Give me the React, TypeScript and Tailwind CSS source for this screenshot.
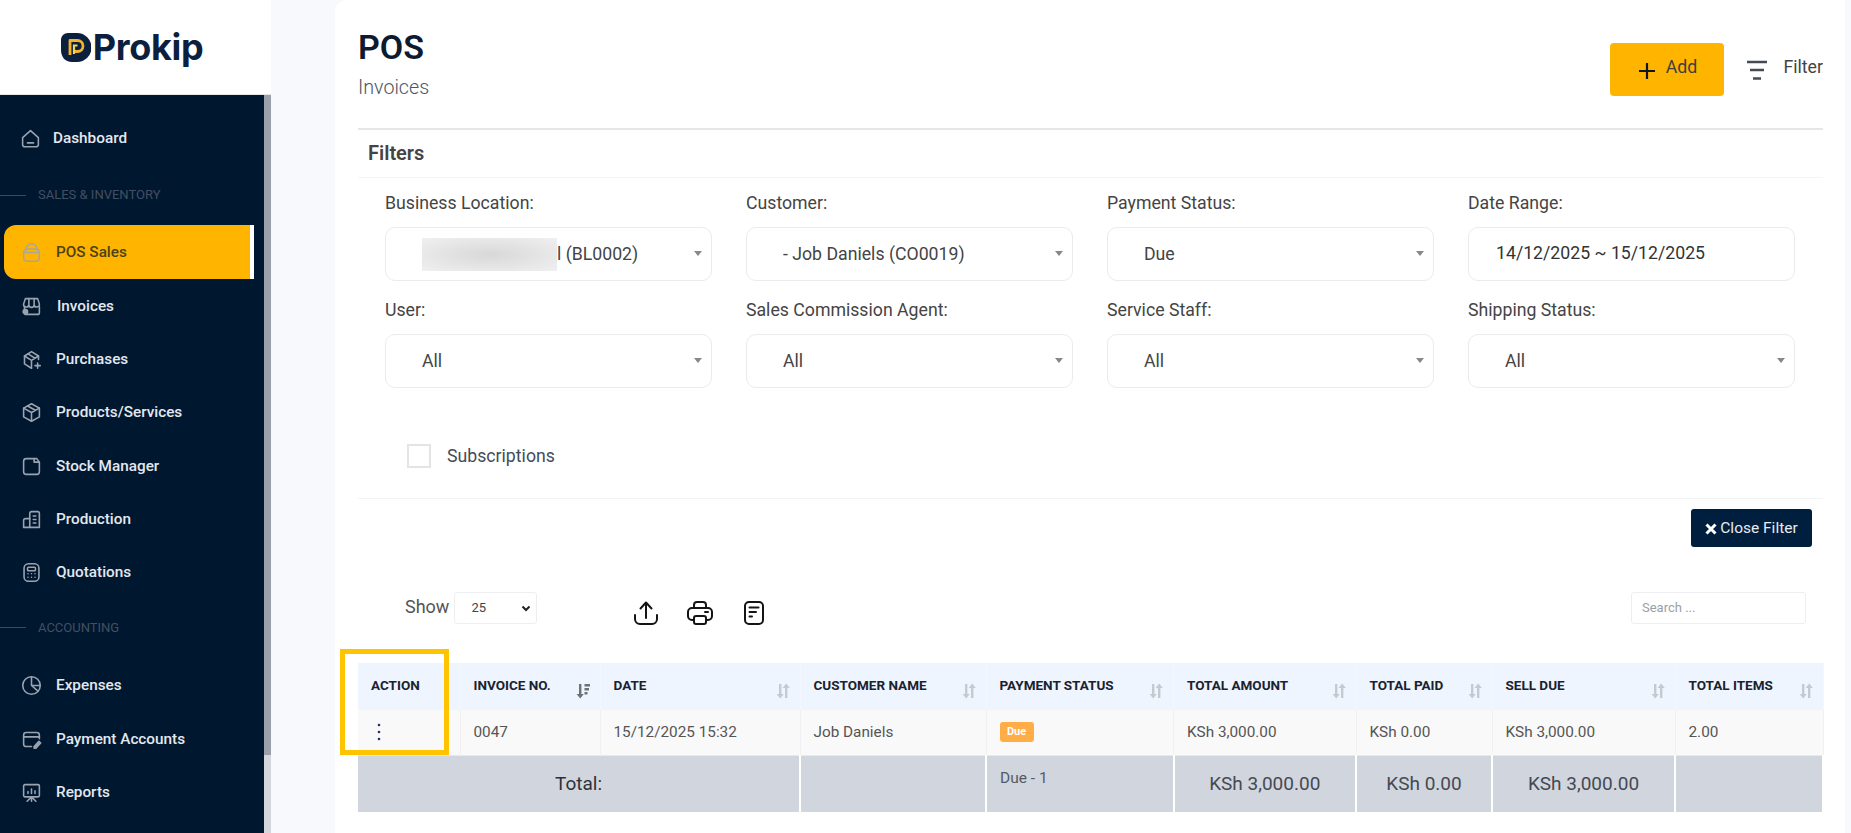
import React from "react";

type IconProps = { className?: string };
const S = ({ children, className = "" }: { children: React.ReactNode; className?: string }) => (
  <svg viewBox="0 0 24 24" fill="none" stroke="currentColor" strokeWidth="1.800" strokeLinecap="round" strokeLinejoin="round" className={className}>
    {children}
  </svg>
);

const HomeI = ({ className }: IconProps) => (
  <S className={className}><path d="M3 11 12 3l9 8v8a2.500 2.500 0 0 1-2.500 2.500h-13A2.500 2.500 0 0 1 3 19z" /><path d="M8.500 17h7" /></S>
);
const BagI = ({ className }: IconProps) => (
  <S className={className}><rect x="3" y="8" width="18" height="14" rx="4" /><path d="M6 9V8a6 6 0 0 1 12 0v1M3.500 12h17" /></S>
);
const ShopI = ({ className }: IconProps) => (
  <S className={className}><path d="M5 3h14l2 6a3 3 0 0 1-6 1 3 3 0 0 1-6 0 3 3 0 0 1-6-1z" /><path d="M9 3v6M15 3v6M4 12v7a2 2 0 0 0 2 2h13a2 2 0 0 0 2-2v-7" /><circle cx="5" cy="18" r="2.500" fill="currentColor" /></S>
);
const BoxPlusI = ({ className }: IconProps) => (
  <S className={className}><path d="M20 12V8l-8-5-8 5v9l8 5" /><path d="m4 8 8 5 8-5M12 13v9M8 5.500l8 5" /><path d="M19 16v6M16 19h6" /></S>
);
const BoxI = ({ className }: IconProps) => (
  <S className={className}><path d="m12 2 9 5v10l-9 5-9-5V7z" /><path d="m3 7 9 5 9-5M12 12v10M7.500 4.500l9 5" /></S>
);
const NoteI = ({ className }: IconProps) => (
  <S className={className}><path d="M6 3h12l3 4v11a3 3 0 0 1-3 3H6a3 3 0 0 1-3-3V6a3 3 0 0 1 3-3z" /><path d="M15 3.500V7h5.500" /></S>
);
const BuildingI = ({ className }: IconProps) => (
  <S className={className}><path d="M10 21V5a2 2 0 0 1 2-2h7a2 2 0 0 1 2 2v16z" /><path d="M10 11H5a2 2 0 0 0-2 2v8h7M14 8h3M14 12h3M14 16h3" /></S>
);
const CalcI = ({ className }: IconProps) => (
  <S className={className}><rect x="3.500" y="2" width="17" height="20" rx="5" /><rect x="7.500" y="6" width="9" height="4" rx="1" /><path d="M8 13.500h.01M12 13.500h.01M16 13.500h.01M8 17.500h.01M12 17.500h.01M16 17.500h.01" /></S>
);
const PieI = ({ className }: IconProps) => (
  <S className={className}><circle cx="12" cy="12" r="10" /><path d="M12 2v10l7.500 6.500M12 12h10" /></S>
);
const CardI = ({ className }: IconProps) => (
  <S className={className}><path d="M12 20H6a3 3 0 0 1-3-3V7a3 3 0 0 1 3-3h12a3 3 0 0 1 3 3v4" /><path d="M3 9h18" /><path d="m15 20 5.500-6 2 2-5.500 6h-2z" fill="currentColor" /></S>
);
const BoardI = ({ className }: IconProps) => (
  <S className={className}><rect x="3" y="3" width="18" height="14" rx="1.500" /><path d="M8 13v-2M12 13V8M16 13v-3M12 17v5M7 22l5-5 5 5" /></S>
);

const nav = [
  { t: "Invoices", I: ShopI, tx: "ml-[15.500px]" },
  { t: "Purchases", I: BoxPlusI, tx: "ml-[14.500px]" },
  { t: "Products/Services", I: BoxI, tx: "ml-[14.500px]" },
  { t: "Stock Manager", I: NoteI, tx: "ml-[14.500px]" },
  { t: "Production", I: BuildingI, tx: "ml-[14.500px]" },
  { t: "Quotations", I: CalcI, tx: "ml-[14.500px]" },
];
const nav2 = [
  { t: "Expenses", I: PieI },
  { t: "Payment Accounts", I: CardI },
  { t: "Reports", I: BoardI },
];

const NavItem = ({ t, I, tx = "ml-[14.500px]" }: { t: string; I: React.ComponentType<IconProps>; tx?: string }) => (
  <div className="flex h-[53.3px] items-center pl-[20.500px] pt-[1px] text-[15.300px] font-medium text-[#e4e8ee]">
    <I className="h-[21px] w-[21px] text-[#9aa3ae]" />
    <span className={tx}>{t}</span>
  </div>
);

const Section = ({ t, h }: { t: string; h: string }) => (
  <div className={`flex items-center text-[13px] text-[#434f60] ${h}`}>
    <span className="mr-3 h-px w-[26px] bg-[#3d4959]" />
    {t}
  </div>
);

const Caret = () => <span className="h-0 w-0 border-x-4 border-t-[5px] border-x-transparent border-t-[#888888]" />;

const Select = ({ children }: { children: React.ReactNode }) => (
  <div className="flex h-[54px] items-center justify-between rounded-[10px] border-[1.5px] border-[#e9ebef] pl-9 pr-[9px] text-[17.700px] text-[#444444]">
    <span className="flex items-center">{children}</span>
    <span className="mb-[2px] flex"><Caret /></span>
  </div>
);

const Field = ({ label, children }: { label: string; children: React.ReactNode }) => (
  <div>
    <div className="mb-3 h-6 text-[17.700px] leading-6 text-[#444444]">{label}</div>
    {children}
  </div>
);

const SortIcon = ({ active = false }: { active?: boolean }) => (
  <svg viewBox="0 0 14 16" className={`mt-[8px] h-4 w-[14px] shrink-0 ${active ? "text-[#6f7276]" : "text-[#c6cad0]"}`} fill="currentColor">
    <path d="M3 1h2.400v10h2.400L4.200 15.500.600 11H3z" />
    {active ? (
      <path d="M8.500 1h5.500v2.400H8.500zM8.500 5h4.500v2.400H8.500zM8.500 9h3v2.400h-3z" />
    ) : (
      <path d="M9 15h2.400V5h2.400L10.200.500 6.600 5H9z" />
    )}
  </svg>
);

const headers = ["INVOICE NO.", "DATE", "CUSTOMER NAME", "PAYMENT STATUS", "TOTAL AMOUNT", "TOTAL PAID", "SELL DUE", "TOTAL ITEMS"];
const widths = ["w-[102px]", "w-[140px]", "w-[200px]", "w-[186px]", "w-[187.5px]", "w-[182.5px]", "w-[136px]", "w-[183px]", "w-[148px]"];
const td = "border-r border-[#f1f1f1] pl-[13px] align-middle text-[15.300px] text-[#555555]";
const tf = "border-r-2 border-white text-center text-[19px] text-[#444a52]";

export default function App() {
  return (
    <div className="flex h-screen w-full overflow-hidden bg-[#f8f9fd] font-['Roboto',sans-serif]">
      <aside className="flex w-[271px] shrink-0 flex-col">
        <div className="flex h-[95px] shrink-0 items-center justify-center border-b border-[#e3e5e8] bg-white pr-[7px]">
          <svg viewBox="0 0 30 29" className="h-[29px] w-[30px]">
            <path d="M7 0h9a14.500 14.500 0 0 1 0 29h-5C4 29 0 24 0 17V7C0 3 3 0 7 0z" fill="#0b1f3f" />
            <path d="M9 22V7.500h7.500a5.500 5.500 0 0 1 0 11H13" fill="none" stroke="#f4b42a" strokeWidth="2.800" strokeLinejoin="round" />
            <path d="M13 21v-8.500h3.500" fill="none" stroke="#f4d35a" strokeWidth="2.200" />
          </svg>
          <span className="ml-[2px] font-['Inter',sans-serif] text-[36px] font-bold leading-none tracking-[-0.3px] text-[#0c1f3f]">Prokip</span>
        </div>
        <div className="flex min-h-0 flex-1">
          <nav className="w-[264px] shrink-0 bg-[#001730]">
            <div className="flex h-[70px] items-end pb-[17px] pl-[19.500px] text-[15.300px] font-medium text-[#e4e8ee]">
              <HomeI className="mb-[-1px] h-[21px] w-[21px] text-[#9aa3ae]" />
              <span className="ml-[12.500px] leading-[20px]">Dashboard</span>
            </div>
            <Section t="SALES & INVENTORY" h="h-[60px]" />
            <div className="ml-1 flex h-[54px] w-[250px] items-center rounded-l-[12px] border-r-4 border-white bg-[#ffb400] pl-[16.500px] text-[15.300px] font-medium text-[#4b4216]">
              <BagI className="h-[21px] w-[21px] text-[#aaa796]" />
              <span className="ml-[14.500px]">POS Sales</span>
            </div>
            {nav.map((n) => <NavItem key={n.t} {...n} />)}
            <Section t="ACCOUNTING" h="h-[60px] pb-[3px]" />
            {nav2.map((n) => <NavItem key={n.t} {...n} />)}
          </nav>
          <div className="flex w-[7px] flex-col bg-[#d3d6db]">
            <div className="h-[660px] bg-[#9ba1ab]" />
          </div>
        </div>
      </aside>

      <main className="ml-[64px] h-full w-[1510px] shrink-0 rounded-tl-[12px] bg-white pl-[23px] pr-[22px] text-[#444444]">
        <header className="flex h-[130px] justify-between border-b-2 border-[#e6e6e6]">
          <div className="pt-[28px]">
            <h1 className="text-[34px] font-semibold leading-[38px] text-[#0d1b30]">POS</h1>
            <p className="mt-[10px] text-[19.700px] font-light leading-[24px] text-[#4b5563]">Invoices</p>
          </div>
          <div className="flex items-start pt-[43px]">
            <button className="flex h-[53px] w-[114px] items-center justify-center gap-[10px] rounded-[4px] bg-[#ffb400] text-[17.700px] text-[#3f3f3a]">
              <svg viewBox="0 0 18 18" className="mt-[3px] h-[18px] w-[18px] text-[#10151f]" fill="none" stroke="currentColor" strokeWidth="2.200"><path d="M9 1v16M1 9h16" /></svg>
              <span className="mb-[5px]">Add</span>
            </button>
            <svg viewBox="0 0 22 22" className="ml-[22px] mt-[16px] h-[22px] w-[22px] text-[#454b55]" fill="none" stroke="currentColor" strokeWidth="2.600"><path d="M1 3h20M4 11h14M7 19.500h8" /></svg>
            <span className="ml-[15px] mt-[11px] text-[17.700px] text-[#444444]">Filter</span>
          </div>
        </header>

        <div className="flex h-[48px] items-center border-b border-[#f5f5f5] pb-[2px] pl-[10px] text-[20px] font-semibold text-[#444444]">Filters</div>

        <div className="grid grid-cols-[327px_327px_327px_327px] gap-x-[34px] gap-y-[17px] pl-[27px] pt-[13px]">
          <Field label="Business Location:">
            <Select>
              <span className="h-[33px] w-[135px] bg-[radial-gradient(ellipse_at_center,#d8d8d8,#f0f0f0)]" />
              <span className="whitespace-pre">l (BL0002)</span>
            </Select>
          </Field>
          <Field label="Customer:"><Select>- Job Daniels (CO0019)</Select></Field>
          <Field label="Payment Status:"><Select>Due</Select></Field>
          <Field label="Date Range:">
            <div className="flex h-[54px] items-center rounded-[10px] border-[1.5px] border-[#e9ebef] pb-[2px] pl-[27px] text-[17.700px] text-[#333333]">14/12/2025 ~ 15/12/2025</div>
          </Field>
          <Field label="User:"><Select>All</Select></Field>
          <Field label="Sales Commission Agent:"><Select>All</Select></Field>
          <Field label="Service Staff:"><Select>All</Select></Field>
          <Field label="Shipping Status:"><Select>All</Select></Field>
        </div>

        <div className="ml-[49px] mt-[56px] flex items-center">
          <span className="h-6 w-6 border-2 border-[#e4e4e0]" />
          <span className="ml-4 text-[17.700px] leading-6 text-[#444c58]">Subscriptions</span>
        </div>

        <div className="mt-[30px] flex h-[49px] justify-end border-t border-[#f3f3f3] pr-[11px] pt-[10px]">
          <button className="flex h-[38px] w-[121px] items-center justify-center gap-[3px] rounded-[3px] bg-[#001f3f] pt-[2px] text-[15.500px] text-[#e8ebef]">
            <svg viewBox="0 0 12 12" className="h-3 w-3 text-white" fill="none" stroke="currentColor" strokeWidth="3"><path d="m1.500 1.500 9 9M10.500 1.500l-9 9" /></svg>
            Close Filter
          </button>
        </div>

        <div className="mt-[45px] flex h-8 items-start pl-[47px]">
          <span className="mt-[3px] text-[18px] leading-[24px] text-[#555555]">Show</span>
          <div className="ml-[5px] flex h-8 w-[83px] items-center justify-between rounded-[3px] border border-[#eceef2] pl-4 pr-[4px] text-[13px] text-[#444444]">
            25
            <svg viewBox="0 0 12 12" className="h-3 w-3 text-[#222222]" fill="none" stroke="currentColor" strokeWidth="2"><path d="m2.500 4.500 3.500 3.500 3.500-3.500" /></svg>
          </div>
          <svg viewBox="0 0 24 24" className="ml-[97px] mt-[9px] h-6 w-6 text-[#141414]" fill="none" stroke="currentColor" strokeWidth="2" strokeLinecap="round" strokeLinejoin="round"><path d="M1 14v4a5 5 0 0 0 5 5h12a5 5 0 0 0 5-5v-4" /><path d="M12 17V2M6.500 7.500 12 1.500l5.500 6" /></svg>
          <svg viewBox="0 0 26 24" className="ml-[29px] mt-[9px] h-6 w-[26px] text-[#141414]" fill="none" stroke="currentColor" strokeWidth="2" strokeLinejoin="round" strokeLinecap="round"><path d="M7 7V4a3 3 0 0 1 3-3h6a3 3 0 0 1 3 3v3" /><path d="M7 19H5a4 4 0 0 1-4-4v-4a4 4 0 0 1 4-4h16a4 4 0 0 1 4 4v4a4 4 0 0 1-4 4h-2" /><rect x="7" y="15" width="12" height="8" rx="2" /><path d="M18 11h3" /></svg>
          <svg viewBox="0 0 20 24" className="ml-[31px] mt-[9px] h-6 w-5 text-[#141414]" fill="none" stroke="currentColor" strokeWidth="2" strokeLinecap="round"><rect x="1" y="1" width="18" height="22" rx="4" /><path d="M5.500 6.500h9M5.500 11h6.500M5.500 15.500h2.500" /></svg>
          <div className="ml-auto mr-[17px] flex h-8 w-[175px] items-center rounded-[3px] border border-[#eceef2] pl-[10px] text-[13px] text-[#9a9fa6]">Search ...</div>
        </div>

        <div className="relative mt-[39px]">
          <table className="w-[1465px] table-fixed border-collapse">
            <colgroup>{widths.map((w) => <col key={w} className={w} />)}</colgroup>
            <thead>
              <tr className="h-[47px] bg-[#eef5fe]">
                <th className="border-r border-[#f4f8fe] pb-[3px] pl-[13px] text-left text-[13.500px] font-bold text-[#1a2230]">ACTION</th>
                {headers.map((h, i) => (
                  <th key={h} className="border-r border-[#f4f8fe] pl-[13px] pr-[10px] text-left text-[13.500px] font-bold text-[#1a2230]">
                    <div className="flex items-start justify-between">
                      <span className="mt-[2px] whitespace-nowrap leading-[17px]">{h}</span>
                      <SortIcon active={i === 0} />
                    </div>
                  </th>
                ))}
              </tr>
            </thead>
            <tbody>
              <tr className="h-[45px] bg-[#f9f9f9]">
                <td className="border-r border-[#f1f1f1] pl-[19px]">
                  <svg viewBox="0 0 4 18" className="h-[18px] w-1 text-[#2a2d6b]" fill="currentColor"><circle cx="2" cy="2" r="1.300" /><circle cx="2" cy="9" r="1.300" /><circle cx="2" cy="16" r="1.300" /></svg>
                </td>
                <td className={td}>0047</td>
                <td className={td}>15/12/2025 15:32</td>
                <td className={td}>Job Daniels</td>
                <td className={td}>
                  <span className="flex h-5 w-[34px] items-center justify-center rounded-[3px] bg-[#ffad46] text-[11px] font-bold text-white">Due</span>
                </td>
                <td className={td}>KSh 3,000.00</td>
                <td className={td}>KSh 0.00</td>
                <td className={td}>KSh 3,000.00</td>
                <td className={td}>2.00</td>
              </tr>
            </tbody>
            <tfoot>
              <tr className="h-[57px] border-t border-[#e8e8e8] bg-[#d1d5de]">
                <td colSpan={3} className="border-r-2 border-white text-center text-[19px] text-[#2d323a]">Total:</td>
                <td className={tf} />
                <td className="border-r-2 border-white pb-[10px] pl-[13px] text-[15.500px] text-[#555a62]">Due - 1</td>
                <td className={tf}>KSh 3,000.00</td>
                <td className={tf}>KSh 0.00</td>
                <td className={tf}>KSh 3,000.00</td>
                <td className={tf} />
              </tr>
            </tfoot>
          </table>
          <div className="absolute left-[-18px] top-[-14px] h-[106px] w-[109px] border-[5px] border-[#ffc400]" />
        </div>
      </main>
    </div>
  );
}
